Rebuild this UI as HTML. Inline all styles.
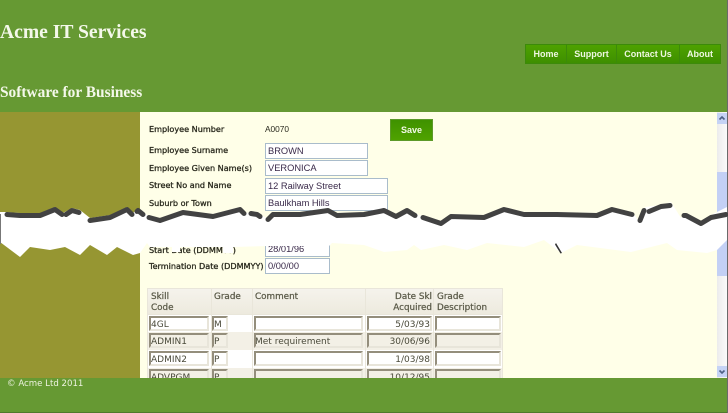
<!DOCTYPE html>
<html><head><meta charset="utf-8"><title>Acme IT Services</title>
<style>
html,body{margin:0;padding:0}
body{width:728px;height:413px;position:relative;overflow:hidden;background:#669933;font-family:"Liberation Sans",sans-serif}
.a{position:absolute;white-space:nowrap}
h1,h2{margin:0;position:absolute;font-family:"Liberation Serif",serif;font-weight:bold;color:#f4f8ea;white-space:nowrap}
.l{position:absolute;font:8.1px/12px "DejaVu Sans",sans-serif;color:#2a2a1e;-webkit-text-stroke:.3px #2a2a1e;white-space:nowrap}
.i{position:absolute;box-sizing:border-box;background:#fff;border:1px solid #a9bccb;font:9.3px/14px "Liberation Sans",sans-serif;color:#3a2a4a;padding-left:2px;height:16px;white-space:nowrap;overflow:hidden}
.n{position:absolute;top:44px;height:20px;box-sizing:border-box;border:1px solid #3c8a0a;background:linear-gradient(#4ea200,#3e8f00);color:#eef7e0;font:bold 9px/18px "Liberation Sans",sans-serif;text-align:center}
.c{position:absolute;box-sizing:border-box}
.t{position:absolute;box-sizing:border-box;height:15px;background:#fff;border:2px solid;border-color:#948e7c #e8e5da #e8e5da #948e7c;font:9px/14px "DejaVu Sans",sans-serif;color:#4a4a3a;white-space:nowrap;overflow:hidden}
.h{position:absolute;font:8.8px/11px "DejaVu Sans",sans-serif;color:#5a5a48;white-space:nowrap;-webkit-text-stroke:.25px #5a5a48}
</style></head><body>
<div class="a" style="left:0;top:112px;width:140px;height:266px;background:#969632"></div>
<div class="a" style="left:140px;top:112px;width:577px;height:266px;background:#ffffe8"></div>

<h1 style="left:0;top:22px;font-size:19.6px;line-height:22px">Acme IT Services</h1>
<h2 style="left:0;top:84px;font-size:15.4px;line-height:18px">Software for Business</h2>

<div class="n" style="left:525px;width:42px">Home</div>
<div class="n" style="left:566px;width:51px">Support</div>
<div class="n" style="left:616px;width:64px">Contact Us</div>
<div class="n" style="left:679px;width:42px">About</div>

<div class="l" style="left:149px;top:123px">Employee Number</div>
<div class="a" style="left:265px;top:123px;font:8.3px/12px 'Liberation Sans',sans-serif;color:#2a2a1e">A0070</div>
<div class="a" style="left:390px;top:119px;width:43px;height:22px;box-sizing:border-box;border:1px solid #5c9a2a;background:linear-gradient(#3f9200,#4fa200);color:#f4f9e8;font:bold 9px/20px 'Liberation Sans',sans-serif;text-align:center">Save</div>

<div class="l" style="left:149px;top:144px">Employee Surname</div>
<div class="i" style="left:265px;top:143px;width:103px">BROWN</div>
<div class="l" style="left:149px;top:162px">Employee Given Name(s)</div>
<div class="i" style="left:265px;top:160px;width:103px">VERONICA</div>
<div class="l" style="left:149px;top:179px">Street No and Name</div>
<div class="i" style="left:265px;top:178px;width:123px">12 Railway Street</div>
<div class="l" style="left:149px;top:197px">Suburb or Town</div>
<div class="i" style="left:265px;top:195px;width:123px">Baulkham Hills</div>

<div class="l" style="left:149px;top:244px">Start Date (DDMMYY)</div>
<div class="i" style="left:265px;top:241px;width:65px">28/01/96</div>
<div class="l" style="left:149px;top:260px">Termination Date (DDMMYY)</div>
<div class="i" style="left:265px;top:258px;width:65px">0/00/00</div>

<!-- table -->
<div class="c" style="left:147px;top:288px;width:356px;height:90px;background:#e9e6da;overflow:hidden">
  <div class="c" style="left:1px;top:1px;width:63px;height:25px;background:linear-gradient(#f5f3ec,#edeade)"></div>
  <div class="c" style="left:65px;top:1px;width:40px;height:25px;background:linear-gradient(#f5f3ec,#edeade)"></div>
  <div class="c" style="left:106px;top:1px;width:112px;height:25px;background:linear-gradient(#f5f3ec,#edeade)"></div>
  <div class="c" style="left:219px;top:1px;width:67px;height:25px;background:linear-gradient(#f5f3ec,#edeade)"></div>
  <div class="c" style="left:287px;top:1px;width:68px;height:25px;background:linear-gradient(#f5f3ec,#edeade)"></div>
  <div class="h" style="left:4px;top:4px">Skill<br>Code</div>
  <div class="h" style="left:67px;top:4px">Grade</div>
  <div class="h" style="left:108px;top:4px">Comment</div>
  <div class="h" style="left:219px;top:4px;width:66px;text-align:right">Date Skl<br>Acquired</div>
  <div class="h" style="left:290px;top:4px">Grade<br>Description</div>

  <div class="c" style="left:1px;top:27px;width:354px;height:17px;background:#fff"></div>
  <div class="c" style="left:1px;top:44px;width:354px;height:18px;background:#f3f0e6"></div>
  <div class="c" style="left:1px;top:62px;width:354px;height:18px;background:#fff"></div>
  <div class="c" style="left:1px;top:80px;width:354px;height:18px;background:#f3f0e6"></div>
  <div class="c" style="left:64px;top:27px;width:1px;height:63px;background:#e9e6da"></div>
  <div class="c" style="left:105px;top:27px;width:1px;height:63px;background:#e9e6da"></div>
  <div class="c" style="left:218px;top:27px;width:1px;height:63px;background:#e9e6da"></div>
  <div class="c" style="left:286px;top:27px;width:1px;height:63px;background:#e9e6da"></div>
</div>

<div class="t" style="left:149px;top:316px;width:60px">4GL</div>
<div class="t" style="left:212px;top:316px;width:16px">M</div>
<div class="t" style="left:254px;top:316px;width:109px"></div>
<div class="t" style="left:367px;top:316px;width:65px;text-align:right">5/03/93</div>
<div class="t" style="left:435px;top:316px;width:66px"></div>

<div class="t" style="left:149px;top:333px;width:60px;background:#f3f0e6">ADMIN1</div>
<div class="t" style="left:212px;top:333px;width:16px;background:#f3f0e6">P</div>
<div class="t" style="left:254px;top:333px;width:109px;background:#f3f0e6;text-indent:-1px">Met requirement</div>
<div class="t" style="left:367px;top:333px;width:65px;text-align:right;background:#f3f0e6">30/06/96</div>
<div class="t" style="left:435px;top:333px;width:66px;background:#f3f0e6"></div>

<div class="t" style="left:149px;top:351px;width:60px">ADMIN2</div>
<div class="t" style="left:212px;top:351px;width:16px">P</div>
<div class="t" style="left:254px;top:351px;width:109px"></div>
<div class="t" style="left:367px;top:351px;width:65px;text-align:right">1/03/98</div>
<div class="t" style="left:435px;top:351px;width:66px"></div>

<div class="t" style="left:149px;top:369px;width:60px;background:#f3f0e6">ADVPGM</div>
<div class="t" style="left:212px;top:369px;width:16px;background:#f3f0e6">P</div>
<div class="t" style="left:254px;top:369px;width:109px;background:#f3f0e6"></div>
<div class="t" style="left:367px;top:369px;width:65px;text-align:right;background:#f3f0e6">10/12/95</div>
<div class="t" style="left:435px;top:369px;width:66px;background:#f3f0e6"></div>

<!-- scrollbar -->
<div class="a" style="left:717px;top:112px;width:10px;height:266px;background:linear-gradient(90deg,#ececec,#fafafa)"></div>
<div class="a" style="left:717px;top:172px;width:10px;height:104px;background:#c3d0f5"></div>
<div class="a" style="left:717px;top:113px;width:10px;height:11px;background:#c5d3f5"></div>
<div class="a" style="left:717px;top:366px;width:10px;height:11px;background:#c5d3f5"></div>
<svg class="a" style="left:717px;top:113px" width="10" height="11"><path d="M2.500 6.500L5 4l2.500 2.500" fill="none" stroke="#4d6185" stroke-width="1.6"/></svg>
<svg class="a" style="left:717px;top:366px" width="10" height="11"><path d="M2.500 4.500L5 7l2.500-2.500" fill="none" stroke="#4d6185" stroke-width="1.6"/></svg>

<!-- footer -->
<div class="a" style="left:0;top:378px;width:728px;height:35px;background:#669933"></div>
<div class="a" style="left:0;top:412px;width:728px;height:1px;background:#4f7a2c"></div>
<div class="a" style="left:7px;top:378px;font:8.6px/12px 'DejaVu Sans',sans-serif;color:#eef3e0">© Acme Ltd 2011</div>
<div class="a" style="left:727px;top:0;width:1px;height:413px;background:#6a6a6a"></div>

<!-- torn edge -->
<svg class="a" style="left:0;top:0" width="728" height="413">
<polygon fill="#fff" points="0,212 5,212 20,213 40,213 55,207 63,213 72,208 80,210 90,218 110,215 127,207 133,213 138,208 147,215 160,218 183,210 213,214 240,207 245,213 257,212 263,216 267,218 273,212 300,212 328,208 337,213 364,212 384,208 396,214 407,208 419,215 441,222 451,214 484,215 504,207 524,212 557,212 597,213 612,207 634,214 639,222 645,207 661,205 671,202 681,218 686,213 701,222 711,215 727,207 727,240 717,250 707,253 677,250 667,243 631,252 577,245 561,253 544,240 524,247 487,243 467,250 444,245 421,250 414,245 407,250 384,252 364,245 332,243 329,246 267,246 233,247 150,247 147,243 140,253 133,255 117,247 107,255 90,245 80,255 65,247 50,250 30,247 20,257 0,242"/>
<g fill="#fff">
<rect x="172" y="246" width="8" height="6"/><rect x="223" y="246" width="10" height="7"/><rect x="305" y="245" width="22" height="6"/>
</g>
<g fill="none" stroke="#424242" stroke-width="5" stroke-linejoin="round" stroke-linecap="round" transform="translate(0,2.500)">
<polyline points="7,212 20,213 40,213 55,207 62,212"/>
<polyline points="66,212 72,208 79,210"/>
<polyline points="90,218 110,215 127,207 132,212"/>
<polyline points="137,209 138,208 143,212"/>
<polyline points="149,215 160,218 183,210 213,214 240,207 244,211"/>
<polyline points="251,211 257,212 260,214"/>
<polyline points="268,217 273,212 300,212 328,208 337,213 364,212 384,208 396,214 407,208 415,213"/>
<polyline points="423,215 441,221 451,214 484,215 504,207 524,212 557,212 597,213 612,207 632,212"/>
<polyline points="640,218 644,208"/>
<polyline points="649,209 661,204 670,203"/>
<polyline points="684,213 686,213 701,221 711,215 726,212"/>
</g>
<path d="M556 243l6 10-1.500 .5-5.500-9z" fill="#333"/>
<rect x="0" y="214" width="1" height="30" fill="#777"/>
</svg>
</body></html>
